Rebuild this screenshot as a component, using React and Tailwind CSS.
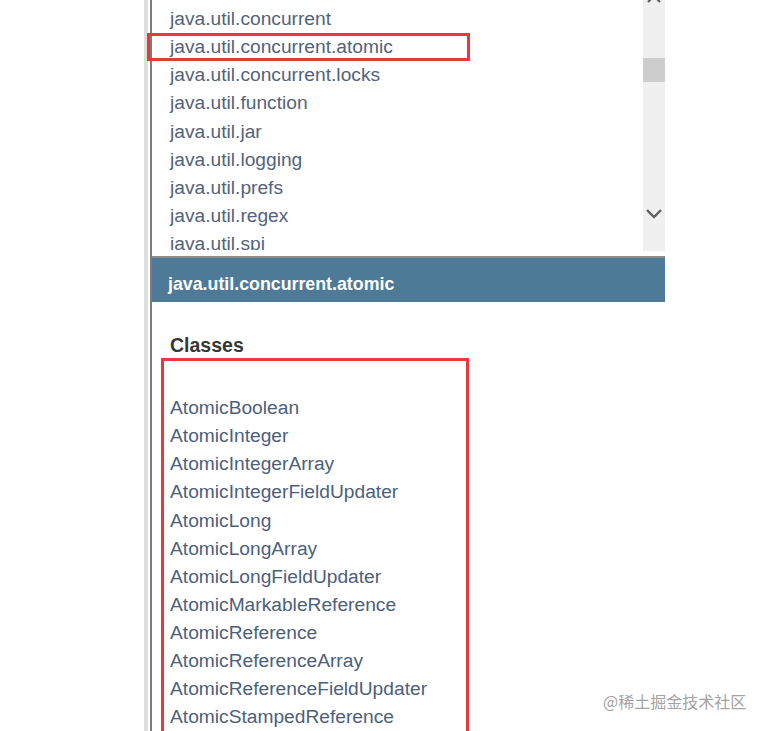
import React from "react";

const packages = [
  "java.util.concurrent",
  "java.util.concurrent.atomic",
  "java.util.concurrent.locks",
  "java.util.function",
  "java.util.jar",
  "java.util.logging",
  "java.util.prefs",
  "java.util.regex",
  "java.util.spi",
];

const classes = [
  "AtomicBoolean",
  "AtomicInteger",
  "AtomicIntegerArray",
  "AtomicIntegerFieldUpdater",
  "AtomicLong",
  "AtomicLongArray",
  "AtomicLongFieldUpdater",
  "AtomicMarkableReference",
  "AtomicReference",
  "AtomicReferenceArray",
  "AtomicReferenceFieldUpdater",
  "AtomicStampedReference",
];

const font = { fontFamily: '"Liberation Sans", Arial, sans-serif' };

const App = () => {
  return (
    <div className="relative w-[769px] h-[731px] bg-white overflow-hidden flex" style={font}>
      {/* left frame edges */}
      <div className="w-[144px] shrink-0" />
      <div className="w-[4px] shrink-0 bg-[#dedede]" />
      <div className="w-[2px] shrink-0" />
      <div className="w-[2px] shrink-0 bg-[#7d7d7d]" />

      <div className="w-[513px] shrink-0 flex flex-col">
        {/* package list with scrollbar */}
        <div className="h-[256px] shrink-0 flex overflow-x-visible overflow-y-clip">
          <div className="flex-1 h-[250px] pt-[5px] pl-[18px] overflow-x-visible overflow-y-clip">
            {packages.map((p, i) => (
              <div key={p} className="relative text-[19.2px] leading-[28.125px] text-[#52637a] whitespace-nowrap">
                {p}
                {i === 1 && (
                  <span className="absolute left-[-23px] top-0 w-[323px] h-[28px] border-[3px] border-[#e8383d]" />
                )}
              </div>
            ))}
          </div>
          <div className="w-[22px] h-[251px] bg-[#f0f0f0] flex flex-col items-center">
            <svg width="16" height="14" viewBox="0 0 16 14" className="mt-[-8px] shrink-0">
              <path d="M2 10 L8 4 L14 10" fill="none" stroke="#606060" strokeWidth="2.2" />
            </svg>
            <div className="mt-[52px] w-[22px] h-[24px] shrink-0 bg-[#cdcdcd]" />
            <svg width="18" height="14" viewBox="0 0 18 14" className="mt-[124px] shrink-0">
              <path d="M2 4 L9 11 L16 4" fill="none" stroke="#606060" strokeWidth="2.4" />
            </svg>
          </div>
        </div>

        {/* package banner */}
        <div className="h-[46px] shrink-0 border-t-[2px] border-[#8c8c8c] bg-[#4d7a97] pl-[16px] pt-[15px]">
          <div className="text-[17.8px] leading-[22px] font-bold text-white">java.util.concurrent.atomic</div>
        </div>

        <div className="shrink-0 pl-[18px] mt-[31px] text-[19.5px] leading-[24px] font-bold text-[#353833]">Classes</div>

        <div className="shrink-0 ml-[9px] mt-[1px] w-[308px] border-[3px] border-[#e8383d] pl-[6px] pt-[33px] pb-[20px]">
          {classes.map((c) => (
            <div key={c} className="text-[19.2px] leading-[28.125px] text-[#4d6079] whitespace-nowrap">
              {c}
            </div>
          ))}
        </div>
      </div>

      {/* watermark */}
      <div
        className="absolute left-[603px] top-[690px] text-[16px] leading-[22px] text-[#a3a3a3]"
        style={{ fontFamily: '"Noto Sans CJK SC", "Noto Sans", sans-serif' }}
      >
        @稀土掘金技术社区
      </div>
    </div>
  );
};

export default App;
